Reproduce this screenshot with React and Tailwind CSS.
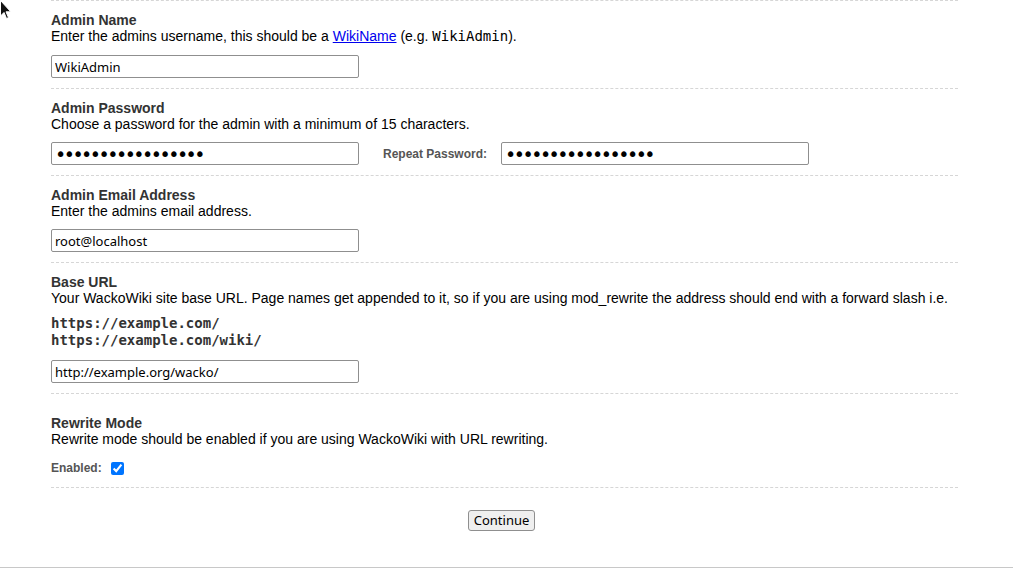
import React from "react";

const mono = "font-['DejaVu_Sans_Mono',monospace]";

function Section({ title, desc, children, extraTop }) {
  return (
    <div className={`border-b border-dashed border-[#d6d6d6] pb-[10px] ${extraTop ? "pt-[21px]" : "pt-[11px]"}`}>
      <div className="font-bold text-[#333] leading-4">{title}</div>
      <div className="leading-4 text-black">{desc}</div>
      {children}
    </div>
  );
}

function Field({ type = "text", value }) {
  const font =
    type === "password"
      ? "font-['DejaVu_Sans',sans-serif] text-[19px] tracking-[-2.5px] leading-none"
      : "font-['Noto_Sans',sans-serif] text-[13px]";
  return (
    <input
      type={type}
      defaultValue={value}
      className={`h-[23px] w-[308px] border border-[#8f8f8f] rounded-[2px] px-[3px] ${font} text-black bg-white outline-none`}
    />
  );
}

export default function App() {
  return (
    <div className="relative min-h-[568px] bg-white font-['Liberation_Sans',Arial,sans-serif] text-[14px]">
      {/* mouse pointer */}
      <svg className="absolute left-0 top-0" width="12" height="20" viewBox="0 0 12 20">
        <path d="M0.5 0.5 L0.5 16 L4 12.5 L6.5 18.5 L8.5 17.6 L6 11.8 L10.8 11.8 Z" fill="#111" stroke="#fff" strokeWidth="1" />
      </svg>

      <div className="border-b border-[#c8c8c8] pb-[36px]">
        <div className="ml-[51px] w-[907px] border-t border-dashed border-[#d6d6d6]">
          <Section
            title="Admin Name"
            desc={
              <>
                Enter the admins username, this should be a{" "}
                <a href="#" className="text-[#0000ee] underline">WikiName</a> (e.g.{" "}
                <span className={mono}>WikiAdmin</span>).
              </>
            }
          >
            <div className="mt-[11px] flex">
              <Field value="WikiAdmin" />
            </div>
          </Section>

          <Section title="Admin Password" desc="Choose a password for the admin with a minimum of 15 characters.">
            <div className="mt-[10px] flex items-center">
              <Field type="password" value="aaaaaaaaaaaaaaaaa" />
              <label className="ml-[24px] mr-[14px] text-[12px] font-bold text-[#555]">Repeat Password:</label>
              <Field type="password" value="aaaaaaaaaaaaaaaaa" />
            </div>
          </Section>

          <Section title="Admin Email Address" desc="Enter the admins email address.">
            <div className="mt-[10px] flex">
              <Field value="root@localhost" />
            </div>
          </Section>

          <Section
            title="Base URL"
            desc="Your WackoWiki site base URL. Page names get appended to it, so if you are using mod_rewrite the address should end with a forward slash i.e."
          >
            <pre className={`mt-[9px] ${mono} font-bold text-[14px] leading-[17px] text-[#333]`}>
              {"https://example.com/\nhttps://example.com/wiki/"}
            </pre>
            <div className="mt-[11px] flex">
              <Field value="http://example.org/wacko/" />
            </div>
          </Section>

          <Section
            extraTop
            title="Rewrite Mode"
            desc="Rewrite mode should be enabled if you are using WackoWiki with URL rewriting."
          >
            <div className="mt-[12px] flex items-center h-[18px]">
              <label className="text-[12px] font-bold text-[#555] mr-[9px]">Enabled:</label>
              <input type="checkbox" defaultChecked className="w-[13px] h-[13px] m-0 accent-[#0075ff]" />
            </div>
          </Section>

          <div className="flex justify-center pt-[22px] pr-[6px]">
            <button className="h-[21px] px-[5px] border border-[#8f8f8f] rounded-[3px] bg-[#efefef] font-['Noto_Sans',sans-serif] text-[13px] text-black leading-none">
              Continue
            </button>
          </div>
        </div>
      </div>
    </div>
  );
}
